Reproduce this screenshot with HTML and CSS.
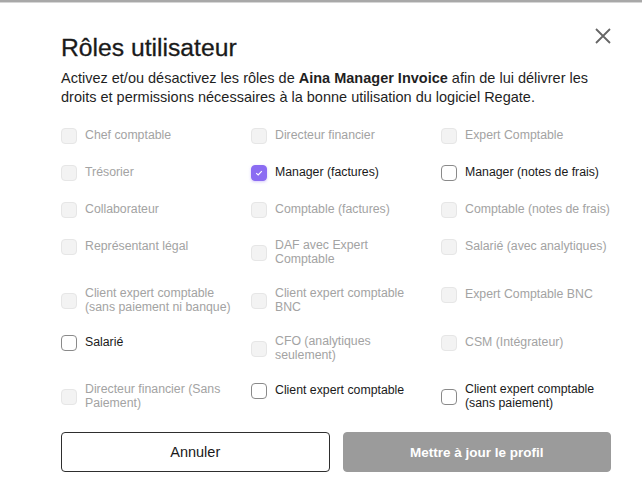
FILE: index.html
```html
<!DOCTYPE html>
<html lang="fr">
<head>
    <meta charset="UTF-8">
    <meta name="viewport" content="width=device-width, initial-scale=1.0">
    <title>Rôles utilisateur</title>
    <link rel="stylesheet" href="styles.css">
</head>
<body>
    <div class="backdrop"><span>Utilisateurs</span></div>
    <div class="modal">
        <div class="modal-header">
            <h2>Rôles utilisateur</h2>
            <button class="close" aria-label="Fermer">
                <svg width="16" height="16" viewBox="0 0 16 16"><path d="M1 1L15 15M15 1L1 15" stroke="#666" stroke-width="1.8" fill="none"/></svg>
            </button>
        </div>
        <p class="intro">Activez et/ou désactivez les rôles de <strong>Aina Manager Invoice</strong> afin de lui délivrer les droits et permissions nécessaires à la bonne utilisation du logiciel Regate.</p>

        <div class="roles">
            <label class="role disabled"><span class="box"></span><span>Chef comptable</span></label>
            <label class="role disabled"><span class="box"></span><span>Directeur financier</span></label>
            <label class="role disabled"><span class="box"></span><span>Expert Comptable</span></label>

            <label class="role disabled"><span class="box"></span><span>Trésorier</span></label>
            <label class="role"><span class="box checked"><svg width="10" height="10" viewBox="0 0 10 10"><path d="M2.2 5.2L4.2 7L7.8 3.2" stroke="#fff" stroke-width="1.1" fill="none"/></svg></span><span>Manager (factures)</span></label>
            <label class="role"><span class="box"></span><span>Manager (notes de frais)</span></label>

            <label class="role disabled"><span class="box"></span><span>Collaborateur</span></label>
            <label class="role disabled"><span class="box"></span><span>Comptable (factures)</span></label>
            <label class="role disabled"><span class="box"></span><span>Comptable (notes de frais)</span></label>

            <label class="role disabled"><span class="box"></span><span>Représentant légal</span></label>
            <label class="role disabled"><span class="box"></span><span>DAF avec Expert Comptable</span></label>
            <label class="role disabled"><span class="box"></span><span>Salarié (avec analytiques)</span></label>

            <label class="role disabled"><span class="box"></span><span>Client expert comptable (sans paiement ni banque)</span></label>
            <label class="role disabled"><span class="box"></span><span>Client expert comptable BNC</span></label>
            <label class="role disabled"><span class="box"></span><span>Expert Comptable BNC</span></label>

            <label class="role"><span class="box"></span><span>Salarié</span></label>
            <label class="role disabled"><span class="box"></span><span>CFO (analytiques seulement)</span></label>
            <label class="role disabled"><span class="box"></span><span>CSM (Intégrateur)</span></label>

            <label class="role disabled"><span class="box"></span><span>Directeur financier (Sans Paiement)</span></label>
            <label class="role"><span class="box"></span><span>Client expert comptable</span></label>
            <label class="role"><span class="box"></span><span>Client expert comptable (sans paiement)</span></label>
        </div>

        <div class="actions">
            <button class="btn btn-outline">Annuler</button>
            <button class="btn btn-disabled">Mettre à jour le profil</button>
        </div>
    </div>
</body>
</html>
```
FILE: styles.css
```css
body {
    font-family: "Liberation Sans", Arial, sans-serif;
    background-color: #fff;
    color: #1a1a1a;
    margin: 0;
}
.backdrop {
    height: 2px;
    overflow: hidden;
    background-color: #a8a8a8;
    padding-left: 72px;
    border-bottom: 1px solid #d6d6d6;
}
.backdrop span {
    display: block;
    margin-top: -11px;
    font-size: 13px;
    line-height: 13px;
    color: #333;
}
.modal {
    padding: 20px 31px 0 61px;
}
.modal-header {
    display: flex;
    justify-content: space-between;
    align-items: flex-start;
}
h2 {
    margin: 10px 0 0;
    font-size: 24.7px;
    font-weight: normal;
    line-height: 30px;
    -webkit-text-stroke: 0.3px #1a1a1a;
}
.close {
    border: none;
    background: none;
    padding: 0;
    margin: 5px 0 0;
    width: 16px;
    height: 16px;
    cursor: pointer;
}
.intro {
    margin: 6px 0 0;
    font-size: 14.5px;
    line-height: 19px;
    color: #1f1f1f;
}
.intro strong {
    font-weight: bold;
}
.roles {
    display: grid;
    grid-template-columns: repeat(3, 170px);
    column-gap: 20px;
    row-gap: 21px;
    margin-top: 21px;
}
.role {
    display: flex;
    align-items: center;
    gap: 8px;
    font-size: 12.3px;
    line-height: 13.5px;
    color: #1a1a1a;
    align-self: start;
    min-height: 16px;
}
.role.disabled {
    color: #a3a3a3;
}
.box {
    flex: 0 0 16px;
    width: 16px;
    height: 16px;
    box-sizing: border-box;
    border: 1px solid #8a8a8a;
    border-radius: 4px;
    background-color: #fff;
    display: flex;
    align-items: center;
    justify-content: center;
}
.role.disabled .box {
    background-color: #f3f3f3;
    border-color: #e6e6e6;
}
.box.checked {
    background-color: #8b6cf2;
    border-color: #8b6cf2;
    box-shadow: 0 1px 3px rgba(139, 108, 242, 0.35);
}
.actions {
    display: grid;
    grid-template-columns: 1fr 1fr;
    gap: 13px;
    margin-top: 22px;
}
.btn {
    height: 40px;
    border-radius: 4px;
    font-family: inherit;
    font-size: 13.5px;
}
.btn-outline {
    background-color: #fff;
    border: 1px solid #2e2e2e;
    color: #1a1a1a;
    font-size: 14.5px;
}
.btn-disabled {
    background-color: #9b9b9b;
    border: 1px solid #9b9b9b;
    color: #fff;
    font-weight: bold;
}
```
